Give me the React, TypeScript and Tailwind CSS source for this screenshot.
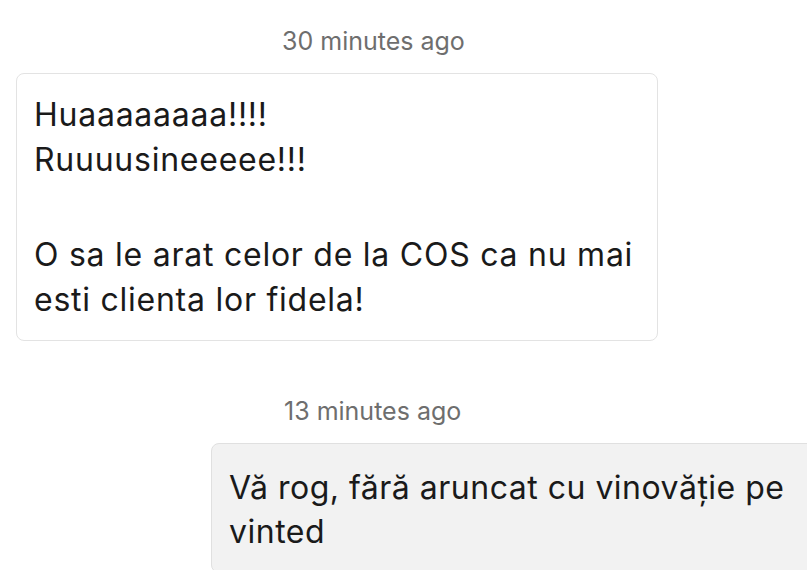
export default function App() {
  return (
    <div
      className="w-[807px] h-[570px] overflow-hidden bg-white flex flex-col"
      style={{ fontFamily: "Inter, 'Noto Sans', sans-serif" }}
    >
      <div className="pt-[24px] pl-[282px] text-[25px] leading-[34px] text-[#6e6e6e]">30 minutes ago</div>
      <div className="mt-[15px] ml-[16px] w-[642px] rounded-[8px] border border-[#e3e3e3] bg-white px-[17px] pt-[18px] pb-[18px] text-[32px] leading-[45px] tracking-[0.75px] text-[#1a1a1a]">
        <div>Huaaaaaaaa!!!!</div>
        <div>Ruuuusineeeee!!!</div>
        <div className="h-[50px]" />
        <div>O sa le arat celor de la COS ca nu mai esti clienta lor fidela!</div>
      </div>
      <div className="mt-[53px] pl-[284px] text-[25px] leading-[34px] text-[#6e6e6e]">13 minutes ago</div>
      <div className="mt-[15px] ml-[211px] w-[640px] shrink-0 rounded-[8px] border border-[#e0e0e0] bg-[#f2f2f2] pl-[17px] pr-[40px] pt-[22px] pb-[18px] text-[32px] leading-[44px] tracking-[0.5px] text-[#1a1a1a]">
        Vă rog, fără aruncat cu vinovăție pe vinted
      </div>
    </div>
  );
}
